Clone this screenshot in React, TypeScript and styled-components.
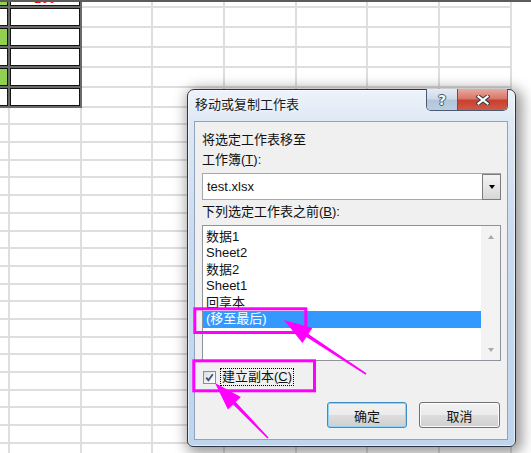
import React from "react";
import styled, { createGlobalStyle } from "styled-components";

const Global = createGlobalStyle`
  html, body { margin: 0; padding: 0; background: #fff; }
  body { font-family: "Liberation Sans", "Noto Sans CJK SC", sans-serif; }
`;

const Stage = styled.div`
  position: relative;
  width: 531px;
  height: 453px;
  overflow: hidden;
  background: #fff;
`;

/* ---------- spreadsheet background ---------- */
const Sheet = styled.div`
  display: grid;
  grid-template-columns: 10px repeat(7, 71.7px);
  grid-template-rows: 5.7px repeat(5, 20px) repeat(20, 17.7px);
  border-top: 2px solid #5c5c5c;
`;

const GridCell = styled.div`
  box-sizing: border-box;
  border-right: 2px solid #dedede;
  border-bottom: 2px solid #dedede;
`;

const TableCell = styled.div`
  box-sizing: border-box;
  border-right: 2px solid #6a6a6a;
  border-bottom: 2px solid #6a6a6a;
  display: flex;
`;

const TableInner = styled.div<{ $green: boolean; $top: boolean; $left: boolean }>`
  flex: 1;
  box-sizing: border-box;
  border: 1px solid #151515;
  border-top: ${(p) => (p.$top ? "none" : "1px solid #151515")};
  border-left: ${(p) => (p.$left ? "none" : "1px solid #151515")};
  background: ${(p) => (p.$green ? "#92d050" : "#fff")};
  overflow: hidden;
  display: flex;
  align-items: flex-end;
  justify-content: center;
`;

const RedValue = styled.span`
  color: #ff0000;
  font-size: 13px;
  line-height: 13px;
`;

/* ---------- dialog ---------- */
const Dialog = styled.div`
  position: absolute;
  left: 187px;
  top: 89px;
  width: 329px;
  height: 358px;
  box-sizing: border-box;
  border: 1px solid #2f3540;
  border-radius: 7px 7px 6px 6px;
  background: linear-gradient(180deg, #eef3fa 0%, #dfe9f5 30px, #cbdcf0 140px, #bfd4ed 100%);
  box-shadow: inset 0 0 0 1px rgba(255, 255, 255, 0.55), 3px 3px 14px 3px rgba(0, 0, 0, 0.42);
  display: flex;
  flex-direction: column;
  padding: 0 7px 6px 6px;
`;

const TitleBar = styled.div`
  height: 31px;
  flex: none;
  display: flex;
  justify-content: space-between;
  align-items: flex-start;
`;

const TitleText = styled.div`
  margin: 7px 0 0 1px;
  font-size: 13px;
  line-height: 16px;
  color: #1a1a1a;
  text-shadow: 0 0 6px rgba(255, 255, 255, 0.9);
`;

const CaptionGroup = styled.div`
  display: flex;
  margin-top: -1px;
  height: 21px;
  border: 1px solid #4a5a70;
  border-top: none;
  border-radius: 0 0 5px 5px;
  overflow: hidden;
`;

const CaptionButton = styled.div<{ $close?: boolean }>`
  width: ${(p) => (p.$close ? "50px" : "30px")};
  display: flex;
  align-items: center;
  justify-content: center;
  box-sizing: border-box;
  border-left: ${(p) => (p.$close ? "1px solid #4a5a70" : "none")};
  background: ${(p) =>
    p.$close
      ? "linear-gradient(180deg, #e9a99f 0%, #d9786b 45%, #c8402f 55%, #cf5a45 100%)"
      : "linear-gradient(180deg, #e4ecf5 0%, #cfdbea 45%, #b3c5da 55%, #bccde0 100%)"};
`;

const HelpGlyph = styled.span`
  font-family: "DejaVu Sans", sans-serif;
  font-weight: bold;
  font-size: 14px;
  line-height: 14px;
  color: #f4f6f9;
  text-shadow: 1px 0 0 #4b5563, -1px 0 0 #4b5563, 0 1px 0 #4b5563, 0 -1px 0 #4b5563;
`;

const Panel = styled.div`
  flex: 1;
  background: #f0f0f0;
  border: 1px solid #8fa3bc;
  display: flex;
  flex-direction: column;
  padding: 0 6px 0 7px;
  font-size: 13px;
  color: #111;
`;

const Label = styled.div<{ $mt: number }>`
  margin-top: ${(p) => p.$mt}px;
  line-height: 16px;
  white-space: nowrap;
`;

const Combo = styled.div`
  margin-top: 5px;
  height: 27px;
  box-sizing: border-box;
  background: #fff;
  border: 1px solid #a3a7ae;
  display: flex;
  align-items: stretch;
`;

const ComboText = styled.div`
  flex: 1;
  padding-left: 4px;
  display: flex;
  align-items: center;
  font-size: 13px;
`;

const DropButton = styled.div`
  width: 19px;
  margin: 0 -1px -1px 0;
  box-sizing: border-box;
  border: 1px solid #7c7c7c;
  background: linear-gradient(180deg, #f4f4f4 0%, #e6e6e6 50%, #d6d6d6 100%);
  display: flex;
  align-items: center;
  justify-content: center;
`;

const DownTriangle = styled.div<{ $color: string }>`
  width: 0;
  height: 0;
  border-left: 3.5px solid transparent;
  border-right: 3.5px solid transparent;
  border-top: 4px solid ${(p) => p.$color};
`;

const UpTriangle = styled.div<{ $color: string }>`
  width: 0;
  height: 0;
  border-left: 3.5px solid transparent;
  border-right: 3.5px solid transparent;
  border-bottom: 4px solid ${(p) => p.$color};
`;

const ListBox = styled.div`
  margin-top: 5px;
  height: 136px;
  box-sizing: border-box;
  background: #fff;
  border: 1px solid #8e939b;
  display: flex;
`;

const ListItems = styled.div`
  flex: 1;
  padding-top: 2.5px;
  display: flex;
  flex-direction: column;
`;

const ListItem = styled.div<{ $selected?: boolean }>`
  height: 16.5px;
  line-height: 16.5px;
  padding-left: 3px;
  white-space: nowrap;
  background: ${(p) => (p.$selected ? "#3399ff" : "transparent")};
  color: ${(p) => (p.$selected ? "#fff" : "#111")};
`;

const ScrollBar = styled.div`
  width: 19px;
  background: #f3f3f3;
  display: flex;
  flex-direction: column;
  justify-content: space-between;
  padding-top: 1px;
  box-sizing: border-box;
`;

const ArrowBox = styled.div`
  height: 20px;
  display: flex;
  align-items: center;
  justify-content: center;
`;

const CheckRow = styled.div`
  margin-top: 7px;
  height: 18px;
  display: flex;
  align-items: center;
`;

const CheckBox = styled.div`
  width: 13px;
  height: 13px;
  margin-left: 1px;
  box-sizing: border-box;
  border: 1px solid #8e8f8f;
  background: linear-gradient(135deg, #dcdcdc 0%, #f4f4f4 60%, #ffffff 100%);
  display: flex;
  align-items: center;
  justify-content: center;
`;

const CheckLabel = styled.div`
  margin-left: 4px;
  padding: 0 1px;
  border: 1px dotted #000;
  line-height: 16px;
  white-space: nowrap;
`;

const ButtonRow = styled.div`
  margin-top: 16px;
  display: flex;
  justify-content: flex-end;
  gap: 12px;
  padding-right: 1px;
`;

const Button = styled.div<{ $w: number; $default?: boolean }>`
  width: ${(p) => p.$w}px;
  height: 26px;
  box-sizing: border-box;
  border: 1px solid ${(p) => (p.$default ? "#3c8dc4" : "#707070")};
  border-radius: 3px;
  background: linear-gradient(180deg, #f2f2f2 0%, #ebebeb 50%, #dddddd 51%, #cfcfcf 100%);
  box-shadow: ${(p) => (p.$default ? "inset 0 0 0 1px #8fd3f7" : "inset 0 0 0 1px #fcfcfc")};
  display: flex;
  align-items: center;
  justify-content: center;
  font-size: 13px;
  color: #111;
`;

const Annotations = styled.svg`
  position: absolute;
  left: 0;
  top: 0;
  pointer-events: none;
`;

const sheetItems = ["数据1", "Sheet2", "数据2", "Sheet1", "回享本"];

export default function App() {
  const cells: React.ReactNode[] = [];
  for (let r = 0; r < 26; r++) {
    for (let c = 0; c < 8; c++) {
      const key = `${r}-${c}`;
      if (r <= 5 && c <= 1) {
        const green = c === 0 && r % 2 === 0;
        cells.push(
          <TableCell key={key}>
            <TableInner $green={green} $top={r === 0} $left={c === 0}>
              {r === 0 && c === 1 ? <RedValue>100</RedValue> : null}
            </TableInner>
          </TableCell>
        );
      } else {
        cells.push(<GridCell key={key} />);
      }
    }
  }

  return (
    <Stage>
      <Global />
      <Sheet>{cells}</Sheet>

      <Dialog>
        <TitleBar>
          <TitleText>移动或复制工作表</TitleText>
          <CaptionGroup>
            <CaptionButton>
              <HelpGlyph>?</HelpGlyph>
            </CaptionButton>
            <CaptionButton $close>
              <svg width="14" height="10" viewBox="0 0 14 10">
                <path d="M2.5 1.5 L11.5 8.5 M11.5 1.5 L2.5 8.5" stroke="#3b3f46" strokeWidth="4.2" strokeLinecap="square" />
                <path d="M2.5 1.5 L11.5 8.5 M11.5 1.5 L2.5 8.5" stroke="#ffffff" strokeWidth="2.2" strokeLinecap="square" />
              </svg>
            </CaptionButton>
          </CaptionGroup>
        </TitleBar>

        <Panel>
          <Label $mt={10}>将选定工作表移至</Label>
          <Label $mt={4}>
            工作簿(<u>T</u>):
          </Label>
          <Combo>
            <ComboText>test.xlsx</ComboText>
            <DropButton>
              <DownTriangle $color="#000" />
            </DropButton>
          </Combo>
          <Label $mt={4}>
            下列选定工作表之前(<u>B</u>):
          </Label>
          <ListBox>
            <ListItems>
              {sheetItems.map((s) => (
                <ListItem key={s}>{s}</ListItem>
              ))}
              <ListItem $selected>(移至最后)</ListItem>
            </ListItems>
            <ScrollBar>
              <ArrowBox>
                <UpTriangle $color="#a9a9a9" />
              </ArrowBox>
              <ArrowBox>
                <DownTriangle $color="#a9a9a9" />
              </ArrowBox>
            </ScrollBar>
          </ListBox>
          <CheckRow>
            <CheckBox>
              <svg width="9" height="9" viewBox="0 0 9 9">
                <path d="M1.2 4.6 L3.4 7.2 L7.8 1.2" fill="none" stroke="#3d4f86" strokeWidth="1.8" />
              </svg>
            </CheckBox>
            <CheckLabel>
              建立副本(<u>C</u>)
            </CheckLabel>
          </CheckRow>
          <ButtonRow>
            <Button $w={80} $default>
              确定
            </Button>
            <Button $w={81}>取消</Button>
          </ButtonRow>
        </Panel>
      </Dialog>

      <Annotations width="531" height="453" viewBox="0 0 531 453">
        <rect x="194.8" y="308.8" width="111" height="23.7" fill="none" stroke="#ff00ff" strokeWidth="3" />
        <rect x="193.8" y="360.8" width="120.7" height="30" fill="none" stroke="#ff00ff" strokeWidth="3" />
        <polygon
          points="284,320 312.35,327.9 308.4,333.9 366.44,373.33 365.56,374.67 306.4,336.9 302.45,342.9"
          fill="#ff00ff"
        />
        <polygon
          points="215,383 240.9,397 235.7,401.9 268.6,437.4 267.4,438.6 233.1,404.4 227.9,409.4"
          fill="#ff00ff"
        />
      </Annotations>
    </Stage>
  );
}
